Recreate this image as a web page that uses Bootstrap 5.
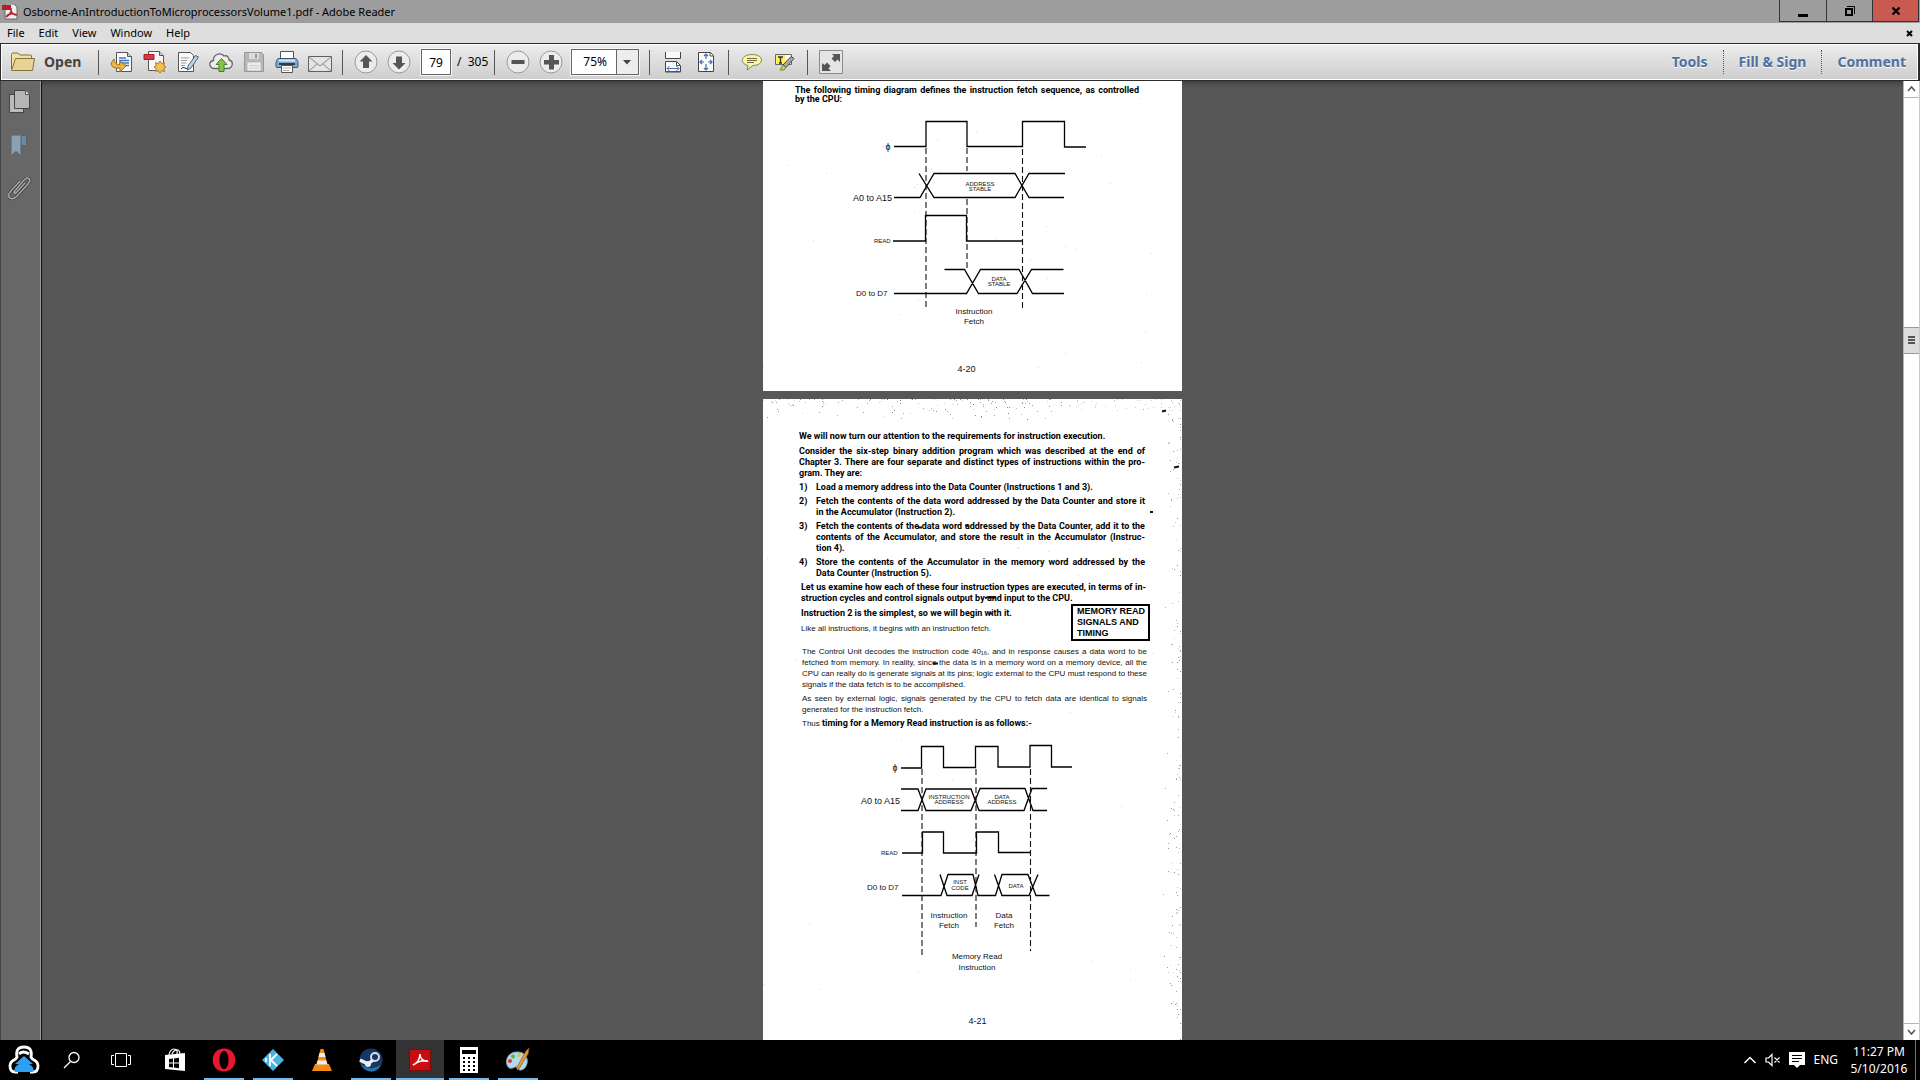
<!DOCTYPE html>
<html lang="en">
<head>
<meta charset="utf-8">
<meta name="viewport" content="width=device-width, initial-scale=1">
<title>Osborne-AnIntroductionToMicroprocessorsVolume1.pdf - Adobe Reader</title>
<link href="https://cdn.jsdelivr.net/npm/bootstrap@5.3.0/dist/css/bootstrap.min.css" rel="stylesheet">
<style>
body{font-family:"Noto Sans","Open Sans",sans-serif;font-size:12px;line-height:16px;color:#000;background:#575757}
button{border:0;background:none;padding:0;color:inherit}
svg{display:block;flex:none}
.title-bar{height:23px;background:#9d9d9d;padding-left:2px}
.title-bar h1{font-size:11px;line-height:16px;font-weight:400}
.win-btn{width:46px;height:22px;border:1px solid #333;border-top:0;border-left-width:0}
.win-btn:first-child{border-left-width:1px;width:48px}
.win-btn.close-btn{background:#c75b52}
.win-group{margin-right:1px}
.menu-bar{height:20px;background:#dedede;padding:0 7px}
.menu-list{gap:14px}
.menu-bar a{color:#000;text-decoration:none;font-size:11px}
.tool-bar{height:38px;border:1px solid #2b2b2b;border-right-width:2px;box-shadow:inset 0 0 0 1px #fff;background:linear-gradient(#ededed,#cdcdcd);padding:0 12px 0 9px}
.open-btn{width:82px;font-weight:700;font-size:14px;color:#444}
.tool{width:33px;height:34px;display:flex;align-items:center;justify-content:center}
.rule{width:1px;height:25px;background:#555;margin:0 6px}
.page-box{width:30px;height:26px;border:1px solid #666;text-align:center;font-size:12px;padding:0;outline:1px solid #f5f5f5;margin:0 6px}
.zoom-box{position:relative;width:68px;height:26px;margin:0 4px;outline:1px solid #f5f5f5}
.zoom-box select{appearance:none;width:68px;height:26px;border:1px solid #666;background:#fff;padding:0 0 0 11px;font-size:12px;color:#000;border-radius:0}
.zoom-box svg{position:absolute;right:1px;top:1px;pointer-events:none}
.pane-link{font-weight:700;font-size:14px;color:#4f6f9f;text-decoration:none;text-shadow:0 1px 0 #fff;padding:0 15px}
.pane-link+.pane-link{border-left:1px dotted #555}
.pane-link:last-child{padding-right:0}
.side-bar{width:42px;background:#676767;border-right:1px solid #111;border-left:1px solid #444;box-shadow:inset -1px 0 #9a9a9a;padding:8px 0 0 7px}
.doc-area{background:#575757;box-shadow:inset 0 5px 5px -3px #3c3c3c}
.sheet{width:419px;background:#fff;position:relative;font:8px/11px "Liberation Sans",Arial,sans-serif;color:#111}
.sheet p,.sheet li{margin:0 0 3px}
.sheet ol{list-style:none;padding:0;margin:0}
.sheet li{display:flex}
.sheet li>span:first-child{width:17px;flex:none}
.sheet li>div{flex:1;min-width:0}
.full{display:block;text-align-last:justify;white-space:nowrap}
.strong-text,.sheet b{font-family:Roboto,"Liberation Sans",sans-serif;font-size:9px;font-weight:700;color:#000}
.note-box{font-size:9px;font-weight:700;border:2px solid #000;padding:0 4px;width:79px;height:37px;white-space:nowrap;color:#000}
.folio{font-size:9px;text-align:center}
.page-one{padding:5px 0 0}
.page-one .intro{padding:0 43px 0 32px;line-height:9px}
.page-one .folio{padding:2px 12px 16px 0}
.page-two{padding:32px 0 30px}
.page-two .folio{padding-left:10px}
.body-a{padding:0 37px 0 36px}
.body-a>p:first-child{margin-bottom:4px}
.body-b{padding:0 32px 0 38px}
.body-c{padding:5px 35px 1px 39px}
.specks{position:absolute;left:0;top:0;pointer-events:none}
.diagram{font-family:"Liberation Sans",Arial,sans-serif;font-size:8px;fill:#111}
.diagram .wave{fill:none;stroke:#000;stroke-width:1.3}
.diagram .dash{fill:none;stroke:#111;stroke-width:1.1;stroke-dasharray:6 3}
.diagram .tiny{font-size:6px}
.diagram .pin{font-size:9px}
.mid{text-anchor:middle}
.scroll-bar{width:17px;background:#fff;border-left:1px solid #b5b5b5;border-right:1px solid #c9c9c9}
.scroll-end{height:17px;border-bottom:1px solid #b5b5b5;background:#fff;width:100%}
.scroll-end.bottom{border-bottom:0;border-top:1px solid #b5b5b5}
.scroll-thumb{height:27px;background:#dcdcdc;border:1px solid #999;border-width:1px 0;width:100%}
.task-bar{height:40px;background:#000;color:#fff}
.task{width:48px;height:40px;display:flex;align-items:center;justify-content:center;margin-right:1px;position:relative}
.task.open::after{content:"";position:absolute;left:4px;right:4px;bottom:0;height:2px;background:#76b9ed}
.task.active{background:#333}
.task.active::after{left:0;right:0}
.task.last-fixed{margin-right:6px}
.clock{font-size:12px;line-height:17px;text-align:center;width:60px;margin:0 2px 0 11px}
.peek{width:5px;height:40px;border-left:1px solid #777}
</style>
</head>
<body>
<div class="d-flex flex-column vh-100 overflow-hidden">
<header>
 <div class="title-bar d-flex align-items-start">
  <svg class="mt-1" width="17" height="16" viewBox="0 0 17 16"><path d="M3 0h9l3 3v12H3z" fill="#eee" stroke="#666"/><path d="M0 1h9v5H0z" fill="#b3202a"/><path d="M4 13c3-1 6-5 5-9M9 6c0 3 3 5 6 5M4 13c2-3 6-4 11-2" fill="none" stroke="#b3202a" stroke-width="1.5"/></svg>
  <h1 class="m-0 ms-1 pt-1 text-nowrap">Osborne-AnIntroductionToMicroprocessorsVolume1.pdf - Adobe Reader</h1>
  <div class="win-group ms-auto d-flex">
   <button class="win-btn" aria-label="Minimize"><svg class="m-auto" width="12" height="16"><path d="M1 11h10v3H1z"/></svg></button>
   <button class="win-btn" aria-label="Restore"><svg class="m-auto" width="12" height="14" viewBox="0 0 12 14"><path d="M2 5h6v6H2z" fill="none" stroke="#000" stroke-width="2"/><path d="M3 2.500h7.500V10" fill="none" stroke="#000"/></svg></button>
   <button class="win-btn close-btn" aria-label="Close"><svg class="m-auto" width="10" height="12" viewBox="0 0 10 12"><path d="M1.500 2.500l7 7m0-7l-7 7" stroke="#000" stroke-width="2.200"/></svg></button>
  </div>
 </div>
 <nav class="menu-bar d-flex align-items-center" aria-label="Menu">
  <div class="menu-list d-flex"><a href="#">File</a><a href="#">Edit</a><a href="#">View</a><a href="#">Window</a><a href="#">Help</a></div>
  <button class="ms-auto" aria-label="Close document"><svg width="7" height="7" viewBox="0 0 7 7"><path d="M1 1l5 5m0-5L1 6" stroke="#000" stroke-width="2"/></svg></button>
 </nav>
 <div class="tool-bar d-flex align-items-center">
  <button class="open-btn d-flex align-items-center"><svg class="me-2" width="26" height="22" viewBox="0 0 26 22"><path d="M1.500 18V3.500q0-1.500 1.500-1.500h5l2 2h10.500q1 0 1 1V8" fill="#f1dfa5" stroke="#84743f"/><path d="M1.500 19.500L5.500 7.500H24.500L22.500 19.500z" fill="#e8d394" stroke="#84743f"/></svg>Open</button>
  <span class="rule"></span>
  <button class="tool" aria-label="Convert"><svg width="24" height="24" viewBox="0 0 24 24"><path d="M6.500 2.500h11l4 4v15h-15z" fill="#fafafa" stroke="#555"/><path d="M17.500 2.500v4h4" fill="#ccc" stroke="#555"/><path d="M9 8h7M9 10.500h10M9 13h10M9 15.500h10" stroke="#3c78c8" stroke-width="1.300"/><path d="M4 9c-5 5-3 10 6 9v4l6-6-6-5v3.500c-4 .5-5-1.500-6-5.500z" fill="#edb73d" stroke="#9b7120"/></svg></button>
  <button class="tool" aria-label="Create PDF"><svg width="24" height="24" viewBox="0 0 24 24"><path d="M5.500 1.500h11l4 4v15h-15z" fill="#f8f8f8" stroke="#555"/><path d="M16.500 1.500v4h4" fill="#ccc" stroke="#555"/><path d="M1 4.500h10v5H1z" fill="#d93840" stroke="#a51f28"/><path d="M17 11l1.500 2.500 3-.8-.8 3L23 17l-2.300 1.500.8 3-3-.8L17 23l-1.500-2.300-3 .8.800-3L11 17l2.300-1.300-.8-3 3 .8z" fill="#f3c052" stroke="#ab7a25"/></svg></button>
  <button class="tool" aria-label="Sign"><svg width="24" height="24" viewBox="0 0 24 24"><path d="M2.500 2.500h12l3 3v16h-15z" fill="#fafafa" stroke="#555"/><path d="M5 8h8M5 10.500h6M5 13h5M5 15.500h4" stroke="#999"/><path d="M5 19q2-3 4-1t5-1" fill="none" stroke="#333"/><path d="M12 16L19.500 5.500l3 1.500L15 18l-3.500 2z" fill="#bdd3e8" stroke="#445f7b"/></svg></button>
  <button class="tool" aria-label="Upload"><svg width="24" height="24" viewBox="0 0 24 24"><path d="M6 18.500c-6 0-7-7-1.500-8C4 5 11 1.500 15 6c3-1 5 1 5 4 5 1 4 8-1 8.500z" fill="#eee" stroke="#666" stroke-width="1.300"/><path d="M12.500 8.500l5.500 6h-3v7h-5v-7H7z" fill="#84c449" stroke="#3f8021"/></svg></button>
  <button class="tool" aria-label="Save"><svg width="22" height="22" viewBox="0 0 22 22"><path d="M1.500 1.500h17l2 2v17h-19z" fill="#b7b7b7" stroke="#979797"/><path d="M6 2h10v6H6z" fill="#dcdcdc"/><path d="M12 3h2v4h-2z" fill="#999"/><path d="M4.500 11.500h13v8h-13z" fill="#eee"/><path d="M6 14.500h10M6 17h10" stroke="#ccc"/></svg></button>
  <button class="tool" aria-label="Print"><svg width="24" height="24" viewBox="0 0 24 24"><path d="M5.500 10V1.500h13V10" fill="#fff" stroke="#555"/><path d="M3 8.500h18q2 2 2 4v4q0 1-1 1H2q-1 0-1-1v-4q0-2 2-4z" fill="#82aacf" stroke="#3d5873"/><path d="M4 10.500h16" stroke="#d7e9f8" stroke-width="2"/><path d="M4 13h16v2H4z" fill="#2d3d4c"/><path d="M6.500 15.500h11v7h-11z" fill="#fff" stroke="#555"/><path d="M8 18h8M8 20.500h6" stroke="#aaa"/></svg></button>
  <button class="tool" aria-label="E-mail"><svg class="mt-1" width="24" height="18" viewBox="0 0 24 18"><path d="M.5 1.500h23v15H.5z" fill="#e4e4e4" stroke="#606060"/><path d="M1 2l11 9L23 2M1 16l8-7m14 7l-8-7" fill="none" stroke="#888"/></svg></button>
  <span class="rule"></span>
  <button class="tool" aria-label="Previous page"><svg width="24" height="24" viewBox="0 0 24 24"><circle cx="12" cy="12" r="11" fill="#ececec" stroke="#999"/><path d="M12 5l6.500 6.500H15V18H9v-6.500H5.500z" fill="#555"/></svg></button>
  <button class="tool" aria-label="Next page"><svg width="24" height="24" viewBox="0 0 24 24"><circle cx="12" cy="12" r="11" fill="#ececec" stroke="#999"/><path d="M12 19.500l6.500-6.500H15V6.500H9V13H5.500z" fill="#555"/></svg></button>
  <input class="page-box" value="79" aria-label="Page number"><span class="text-nowrap">/&nbsp; 305</span>
  <span class="rule"></span>
  <button class="tool" aria-label="Zoom out"><svg width="24" height="24" viewBox="0 0 24 24"><circle cx="12" cy="12" r="11" fill="#ececec" stroke="#999"/><path d="M5.500 10h13v4h-13z" fill="#555"/></svg></button>
  <button class="tool" aria-label="Zoom in"><svg width="24" height="24" viewBox="0 0 24 24"><circle cx="12" cy="12" r="11" fill="#ececec" stroke="#999"/><path d="M10 5h5v5h5v4.500h-5v5h-5v-5H5V10h5z" fill="#555"/></svg></button>
  <div class="zoom-box"><select aria-label="Zoom"><option>75%</option></select><svg width="22" height="24"><path d="M0 0h22v24H0z" fill="#ededed"/><path d="M.5 0v24" stroke="#666"/><path d="M7 10h8l-4 4.500z" fill="#444"/></svg></div>
  <span class="rule"></span>
  <button class="tool" aria-label="Fit width"><svg width="18" height="22" viewBox="0 0 18 22"><path d="M1.500 1v6.500h15V1" fill="#fafafa" stroke="#444"/><path d="M1.500 21V10.500h11l4 4V21z" fill="#fafafa" stroke="#444"/><path d="M12.500 10.500v4h4M1 20.500h16" fill="none" stroke="#555"/><path d="M3 17.500h12M5.500 15L3 17.500 5.500 20m7-5l2.500 2.500-2.500 2.500" fill="none" stroke="#4a6bb0"/></svg></button>
  <button class="tool" aria-label="Fit page"><svg width="18" height="22" viewBox="0 0 18 22"><path d="M1.500 1.500h12l3 3v16h-15z" fill="#fafafa" stroke="#444"/><path d="M13 1.500V5h3.500" fill="none" stroke="#555"/><path d="M9 3v5m0 5v6M3 11h4m4 0h4M7 5l2-2 2 2M7 17l2 2 2-2M5 9l-2 2 2 2m8-4l2 2-2 2" fill="none" stroke="#4a6bb0" stroke-width="1.200"/></svg></button>
  <span class="rule"></span>
  <button class="tool" aria-label="Comment"><svg width="22" height="20" viewBox="0 0 22 20"><path d="M11 2.500c13 0 12 11 1 11L6 18l1-4.500c-9-2-7-11 4-11z" fill="#fbf7a0" stroke="#86826a"/><path d="M6 6.500h10M6 8.500h10M6 10.500h7" stroke="#6f6c45"/></svg></button>
  <button class="tool" aria-label="Highlight text"><svg width="22" height="20" viewBox="0 0 22 20"><path d="M1.500 2.500h16v10h-16z" fill="#fff" stroke="#666"/><path d="M2 3h9v9H2z" fill="#fff157"/><path d="M4 5h5M6.500 5v6M5 11h3" stroke="#333" stroke-width="1.400"/><path d="M9 13L17 4.500l3 2L12 15.500z" fill="#aaa" stroke="#444"/><path d="M9 13l3 2.500-2 2.500H6z" fill="#d6cf3b" stroke="#7e7a30"/></svg></button>
  <span class="rule"></span>
  <button class="tool" aria-label="Read mode"><svg width="24" height="24" viewBox="0 0 24 24"><path d="M.5.500h23v23H.5z" fill="#e5e5e5" stroke="#8a8a8a"/><path d="M13 4h8v8l-2.500-2.500-2.500 2.500-3.500-3.500L15 6zM3 13l2.500 2L8 12.500l3.500 3.500L9.500 18.500 12 21H3z" fill="#555"/></svg></button>
  <nav class="ms-auto d-flex align-items-center" aria-label="Panes"><a class="pane-link py-1" href="#">Tools</a><a class="pane-link py-1" href="#">Fill &amp; Sign</a><a class="pane-link py-1" href="#">Comment</a></nav>
 </div>
</header>
<div class="d-flex flex-grow-1 overflow-hidden">
 <aside class="side-bar d-flex flex-column gap-3 flex-shrink-0">
  <button aria-label="Page thumbnails"><svg class="mb-1" width="24" height="26" viewBox="0 0 24 26"><path d="M1.500 5.500h14v18h-14z" fill="#bbb" stroke="#444"/><path d="M6.500 1.500h11l4 4v14h-15z" fill="#b5b5b5" stroke="#444"/><path d="M17.500 1.500v4h4" fill="#ddd" stroke="#555"/></svg></button>
  <button aria-label="Bookmarks"><svg width="24" height="26" viewBox="0 0 24 26"><g transform="translate(0 -2)"><path d="M12.500 2.500h6v10h-6z" fill="#6d8ba0" stroke="#4c6374"/><path d="M3 3q0-1 1-1h10q-1 1-1 3v18l-5-4.500L3 23z" fill="#8ba0b0" stroke="#54626d"/></g></svg></button>
  <button aria-label="Attachments"><svg width="24" height="26" viewBox="0 0 24 26"><g transform="translate(0 -2)" fill="none"><path d="M17 8l-9 10q-2 1-2-1L16 5q4-4 6 0 0 2-2 4L9 21q-5 5-8 1-1-3 2-6l9-10" stroke="#3f3f3f" stroke-width="3"/><path d="M17 8l-9 10q-2 1-2-1L16 5q4-4 6 0 0 2-2 4L9 21q-5 5-8 1-1-3 2-6l9-10" stroke="#aaa" stroke-width="1.500"/></g></svg></button>
 </aside>
 <main class="doc-area flex-grow-1 d-flex flex-column align-items-center gap-2 overflow-hidden">
  <article class="sheet page-one flex-shrink-0">
   <p class="intro strong-text mb-0"><span class="full">The following timing diagram defines the instruction fetch sequence, as controlled</span>by the CPU:</p>
   <svg class="diagram" width="419" height="258" viewBox="763 104 419 258" role="img" aria-label="Instruction fetch timing">
    <path class="wave" d="M894 146.500H926V121.500H967V146.500H1022.500V121.500H1064.500V147H1086M894 197.500H920L934 173.500H1015L1029 197.500H1064M919 173.500L934 197.500H1015L1029 173.500H1065M893 241H925.500V215.500H966.500V241H1023M944.500 269.500H964.500L978.500 293.500H1017L1031.500 269.500H1063.500M894 293.500H966.500L980.500 269.500H1019L1032.500 293.500H1064"/>
    <path class="dash" d="M926 148V309M967 148V171M967 199V268M1022.500 149V310"/>
    <g class="mid"><text x="888" y="150" class="pin">ɸ</text><text x="980" y="186" class="tiny">ADDRESS</text><text x="980" y="191" class="tiny">STABLE</text><text x="999" y="281" class="tiny">DATA</text><text x="999" y="286" class="tiny">STABLE</text><text x="974" y="314">Instruction</text><text x="974" y="324">Fetch</text></g>
    <text x="853" y="201" class="pin">A0 to A15</text><text x="874" y="243" class="tiny">READ</text><text x="856" y="296">D0 to D7</text>
   </svg>
   <div class="folio">4-20</div>
   <svg class="specks" width="419" height="310" data-specks="top"></svg>
  </article>
  <article class="sheet page-two flex-shrink-0">
   <div class="body-a strong-text">
    <p>We will now turn our attention to the requirements for instruction execution.</p>
    <p><span class="full">Consider the six-step binary addition program which was described at the end of</span><span class="full">Chapter 3. There are four separate and distinct types of instructions within the pro-</span>gram. They are:</p>
    <ol>
     <li><span>1)</span><div>Load a memory address into the Data Counter (Instructions 1 and 3).</div></li>
     <li><span>2)</span><div><span class="full">Fetch the contents of the data word addressed by the Data Counter and store it</span>in the Accumulator (Instruction 2).</div></li>
     <li><span>3)</span><div><span class="full">Fetch the contents of the data word addressed by the Data Counter, add it to the</span><span class="full">contents of the Accumulator, and store the result in the Accumulator (Instruc-</span>tion 4).</div></li>
     <li><span>4)</span><div><span class="full">Store the contents of the Accumulator in the memory word addressed by the</span>Data Counter (Instruction 5).</div></li>
    </ol>
   </div>
   <div class="body-b">
    <p class="strong-text mb-0"><span class="full pe-1">Let us examine how each of these four instruction types are executed, in terms of in-</span>struction cycles and control signals output by and input to the CPU.</p>
    <div class="d-flex justify-content-between">
     <div class="pt-1"><p class="strong-text mb-1">Instruction 2 is the simplest, so we will begin with it.</p><p>Like all instructions, it begins with an instruction fetch.</p></div>
     <div class="note-box">MEMORY READ<br>SIGNALS AND<br>TIMING</div>
    </div>
   </div>
   <div class="body-c">
    <p><span class="full">The Control Unit decodes the instruction code 40₁₆, and in response causes a data word to be</span><span class="full">fetched from memory. In reality, since the data is in a memory word on a memory device, all the</span><span class="full">CPU can really do is generate signals at its pins; logic external to the CPU must respond to these</span>signals if the data fetch is to be accomplished.</p>
    <p><span class="full">As seen by external logic, signals generated by the CPU to fetch data are identical to signals</span>generated for the instruction fetch.</p>
    <p class="mb-0">Thus <b>timing for a Memory Read instruction is as follows:-</b></p>
   </div>
   <svg class="diagram" width="419" height="286" viewBox="763 730 419 286" role="img" aria-label="Memory read timing">
    <path class="wave" d="M901 768H921.500V746.500H943.500V767.500H975.500V746.500H998V767H1030V745.500H1051.500V767H1072M901 789H918L926 810.500H971L980 788.500H1025L1033 810.500H1047M901 810.500H918L926 789H971L979 810.500H1024L1032 788.500H1047M902 853H922.500V832H943.500V853H976.500V832H998.500V852.500H1030.500M902 895.500H941L948 874.500H973L978 895.500H995.500L1002 874.500H1028L1036 895.500H1049.500M940 874.500L947 895.500H972L979 874.500M994.500 874.500L1002 895.500H1029L1038 874.500"/>
    <path class="dash" d="M922 769V958M976 769V927M1030.500 769V951"/>
    <g class="mid"><text x="895" y="771" class="pin">ɸ</text><g class="tiny"><text x="949" y="799">INSTRUCTION</text><text x="949" y="804">ADDRESS</text><text x="1002" y="799">DATA</text><text x="1002" y="804">ADDRESS</text><text x="960" y="884">INST</text><text x="960" y="890">CODE</text><text x="1016" y="888">DATA</text></g><text x="949" y="918">Instruction</text><text x="949" y="928">Fetch</text><text x="1004" y="918">Data</text><text x="1004" y="928">Fetch</text><text x="977" y="959">Memory Read</text><text x="977" y="970">Instruction</text></g>
    <text x="861" y="804" class="pin">A0 to A15</text><text x="881" y="855" class="tiny">READ</text><text x="867" y="890">D0 to D7</text>
   </svg>
   <div class="folio">4-21</div>
   <svg class="specks" width="419" height="641" data-specks="edge"><path d="M222 199q6-2 10 0M155 128.500h4M202 126.500h3M226 214.500h3M170 264.500h5M399 12.500l4-1M411 68.500l5-1M387 113h3" fill="none" stroke="#111" stroke-width="2"/></svg>
  </article>
 </main>
 <div class="scroll-bar d-flex flex-column flex-shrink-0">
  <button class="scroll-end" aria-label="Scroll up"><svg class="m-auto" width="9" height="8"><path d="M1 6l3.500-4L8 6" fill="none" stroke="#555" stroke-width="1.500"/></svg></button>
  <div class="d-flex flex-column flex-grow-1"><span style="height:24.800%"></span><button class="scroll-thumb" aria-label="Scroll position"><svg class="m-auto" width="7" height="9"><path d="M0 1h7M0 4h7M0 7h7" stroke="#555" stroke-width="2"/></svg></button></div>
  <button class="scroll-end bottom" aria-label="Scroll down"><svg class="m-auto" width="9" height="8"><path d="M1 2l3.500 4L8 2" fill="none" stroke="#555" stroke-width="1.500"/></svg></button>
 </div>
</div>
<footer class="task-bar d-flex align-items-center flex-shrink-0">
 <button class="task me-0" aria-label="Start"><svg width="32" height="30" viewBox="0 0 32 30"><path d="M10 27H7Q2 27 2 21q0-4 4-6 2-1 3-3Q7 2 16 2t7 10q1 2 3 3 4 2 4 6 0 6-5 6h-3M11 9q4-4 10 0" fill="none" stroke="#fff" stroke-width="2.800"/><path d="M16 11l9 8h-4q6 3 4 8H7q-2-5 4-8H7z" fill="#2da0f5"/></svg></button>
 <button class="task" aria-label="Search"><svg width="18" height="18" viewBox="0 0 18 18"><circle cx="11" cy="6.500" r="5" fill="none" stroke="#fff" stroke-width="1.300"/><path d="M7.500 10.500L1 17" stroke="#fff" stroke-width="1.300"/></svg></button>
 <button class="task last-fixed" aria-label="Task view"><svg width="20" height="16" viewBox="0 0 20 16"><path d="M4.500 1.500h11v13h-11zM3 3.500H.5v9H3M17 3.500h2.500v9H17" fill="none" stroke="#fff"/></svg></button>
 <button class="task" aria-label="Store"><svg width="22" height="24" viewBox="0 0 22 24"><path d="M1 7l20-2v18l-20-2z" fill="#fff"/><path d="M5 7q1-6 5-6t3 5M8 6q2-5 6-4 2 1 2 4" fill="none" stroke="#fff" stroke-width="1.200"/><path d="M5 11l4-.5v4H5zm5-.6l5-.6v4.700h-5zM5 15.500h4v4l-4-.5zm5 0h5v4.700l-5-.6z" fill="#000"/></svg></button>
 <button class="task open" aria-label="Opera"><svg width="24" height="24" viewBox="0 0 24 24"><path fill-rule="evenodd" d="M12 .5c15 0 15 23 0 23S-3 .5 12 .5zm0 2.500c-6 0-6 18 0 18s6-18 0-18z" fill="#e5192e"/></svg></button>
 <button class="task open" aria-label="Kodi"><svg width="24" height="24" viewBox="0 0 24 24"><path d="M12 1l11 11-11 11L1 12z" fill="#4bb3df"/><path d="M9 6v12M10 12l6-6M10 12l6 6M5 10v4" stroke="#fff" stroke-width="1.800" fill="none"/></svg></button>
 <button class="task" aria-label="VLC"><svg width="22" height="24" viewBox="0 0 22 24"><path d="M4 16h14l3 7H1z" fill="#f28a12"/><path d="M9.500 1h3L17 19q-6 3-12 0z" fill="#f58a18"/><path d="M8.500 5h5l1 4h-7zM6.500 12.500h9l1 4h-11z" fill="#eee"/></svg></button>
 <button class="task open" aria-label="Steam"><svg width="24" height="24" viewBox="0 0 24 24"><circle cx="12" cy="12" r="11.500" fill="#153765"/><path d="M2 16q9 8 20 1-4 7-10 6.500Q5 23 2 16z" fill="#2474a8"/><circle cx="16" cy="9" r="4" fill="none" stroke="#ddd" stroke-width="2"/><path d="M1 12l8 4 5-4" stroke="#eee" stroke-width="3.500" fill="none"/><circle cx="9" cy="16" r="3" fill="#eee"/></svg></button>
 <button class="task open active" aria-label="Adobe Reader"><svg width="22" height="22" viewBox="0 0 22 22"><path d="M.5.500h21v21H.5z" fill="#c90d10" stroke="#7b0c0d"/><path d="M4 16c4-1 7-6 7-11 0 4 3 8 8 7-5-1-11 1-15 4z" fill="none" stroke="#fff" stroke-width="1.500"/></svg></button>
 <button class="task open" aria-label="Calculator"><svg width="18" height="26" viewBox="0 0 18 26"><path d="M0 0h18v26H0z" fill="#fff"/><path d="M2 3h14v4H2z"/><path d="M3 11h12M3 15h12M3 19h12M3 23h12" stroke="#000" stroke-width="2" stroke-dasharray="2 3"/></svg></button>
 <button class="task open" aria-label="Paint"><svg width="26" height="26" viewBox="0 0 26 26"><path d="M12 5C4 5 0 12 2 18c2 5 6 3 8 2 3-1 3 4 6 3 5-1 7-7 6-11-1-5-5-7-10-7z" fill="#b5d9ee" stroke="#7da8c4"/><circle cx="5" cy="14" r="2" fill="#d33"/><circle cx="8" cy="9.500" r="2" fill="#67b345"/><circle cx="14" cy="8" r="2" fill="#edc42a"/><path d="M21 4l3-3-1 6-9 15q-3 2-2-2z" fill="#e49a3c" stroke="#8a5a20" stroke-width=".7"/></svg></button>
 <div class="ms-auto d-flex align-items-center">
  <button aria-label="Show hidden icons"><svg width="14" height="10"><path d="M1.500 8L7 2.500 12.500 8" fill="none" stroke="#fff" stroke-width="1.500"/></svg></button>
  <button class="ms-2" aria-label="Sound muted"><svg width="16" height="14" viewBox="0 0 16 14"><path d="M1 5h2.500L7 1.500v11L3.500 9H1zM9.500 4.500l5 5m0-5l-5 5" fill="none" stroke="#fff" stroke-width="1.200"/></svg></button>
  <button class="ms-2" aria-label="Notifications"><svg width="16" height="16" viewBox="0 0 16 16"><path d="M0 0h16v13h-5l-3 3-3-3H0z" fill="#fff"/><path d="M3 3.500h10M3 6.500h10M3 9.500h7" stroke="#000"/></svg></button>
  <span class="ms-2">ENG</span>
  <div class="clock">11:27 PM<br>5/10/2016</div>
  <button class="peek ms-1" aria-label="Show desktop"></button>
 </div>
</footer>
</div>
<script src="https://cdn.jsdelivr.net/npm/bootstrap@5.3.0/dist/js/bootstrap.bundle.min.js"></script>
<script>
// Scanner dust: repeatable specks along the sheet's top and right edges.
let seed = 7;
const rnd = () => (seed = (seed * 16807) % 2147483647) / 2147483647;
document.querySelectorAll('[data-specks]').forEach(svg => {
  const edge = svg.dataset.specks === 'edge';
  const h = +svg.getAttribute('height');
  let out = '';
  const dot = (x, y, o) => { out += `<rect x="${x | 0}" y="${y | 0}" width="1" height="1" opacity="${o.toFixed(2)}"/>`; };
  for (let i = 0; i < 30; i++) dot(rnd() * 415, rnd() * h, .15);
  if (edge) {
    for (let i = 0; i < 130; i++) dot(rnd() * 300, rnd() * rnd() * 24, .15 + rnd() * .35);
    for (let i = 0; i < 40; i++) dot(300 + rnd() * 118, rnd() * 12, .2);
    for (let i = 0; i < 190; i++) dot(418 - rnd() * rnd() * 20, rnd() * h, .15 + rnd() * .3);
  }
  svg.insertAdjacentHTML('beforeend', out);
});
</script>
</body>
</html>
